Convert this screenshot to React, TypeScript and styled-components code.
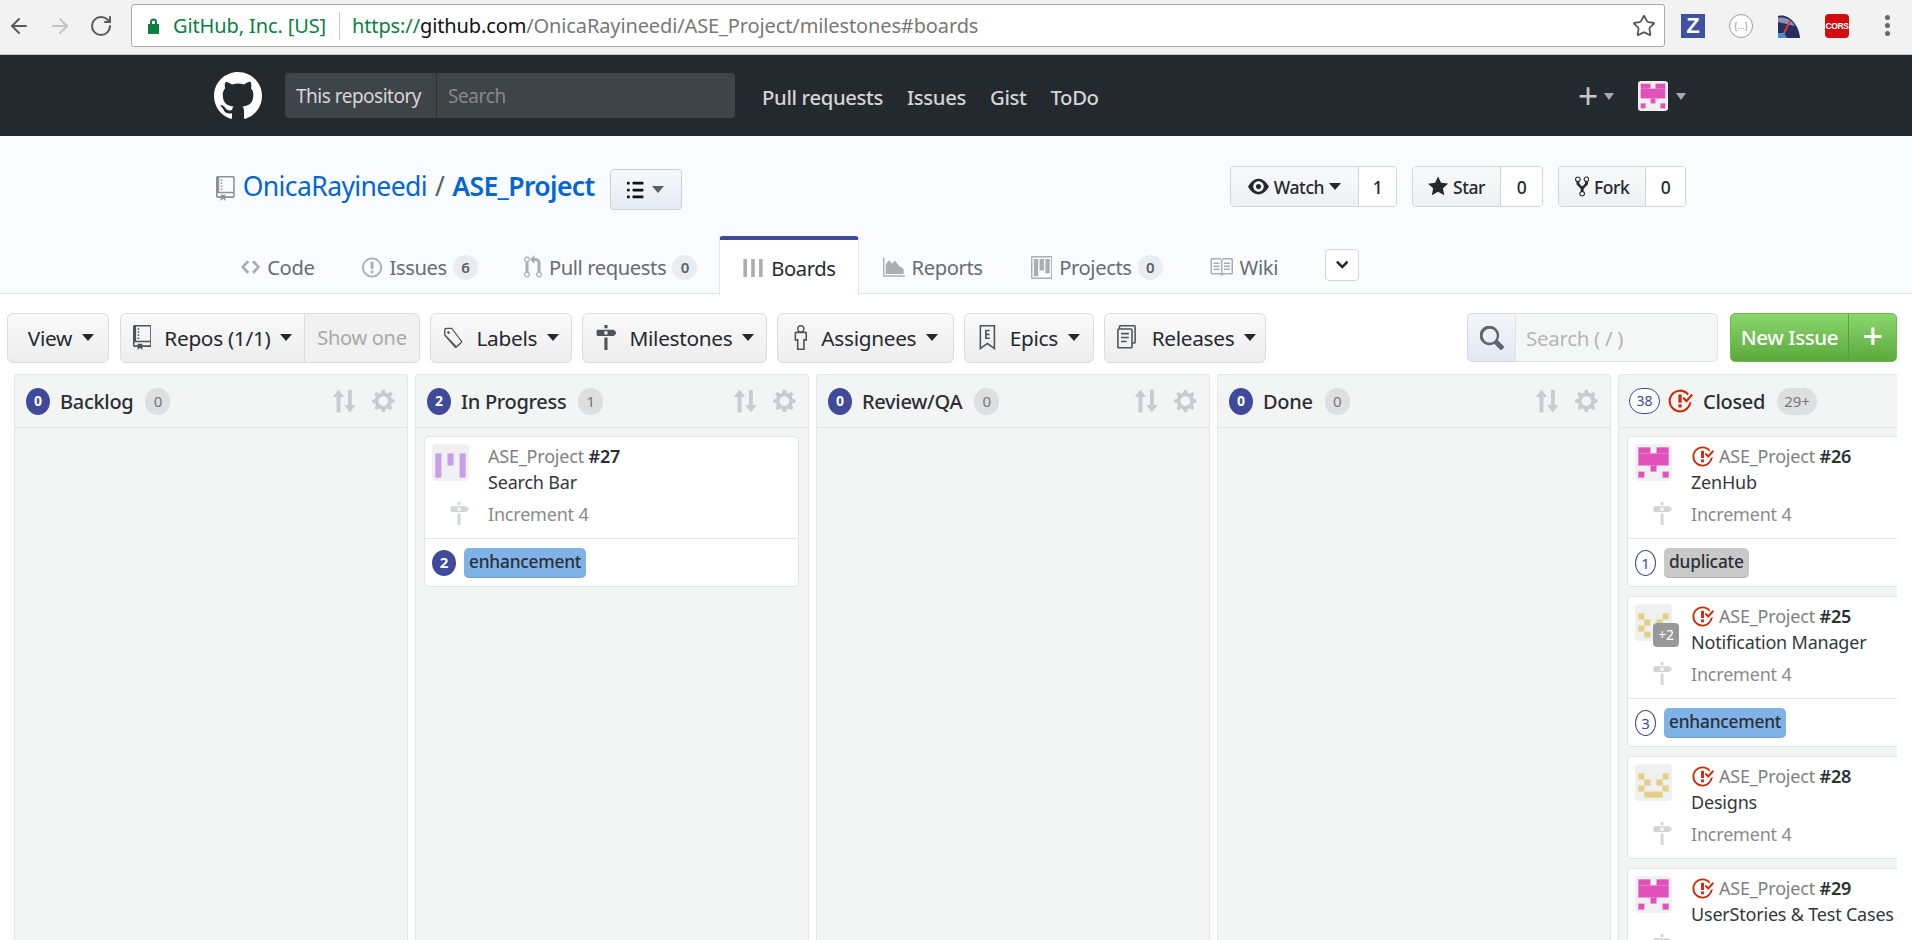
import React from 'react'
import styled, { createGlobalStyle } from 'styled-components'
import { ArrowLeft, ArrowRight, RotateCw, Star } from 'lucide-react'

const GlobalStyle = createGlobalStyle`
  html, body {
    margin: 0;
    height: 940px;
    overflow: hidden;
    background: #fff;
    font-family: "Noto Sans", "Open Sans", sans-serif;
    color: #24292e;
  }
  * { box-sizing: border-box; }
`

const paths = {
  mark: 'M8 0C3.58 0 0 3.58 0 8c0 3.54 2.29 6.53 5.47 7.59.4.07.55-.17.55-.38 0-.19-.01-.82-.01-1.49-2.01.37-2.53-.49-2.69-.94-.09-.23-.48-.94-.82-1.13-.28-.15-.68-.52-.01-.53.63-.01 1.08.58 1.23.82.72 1.21 1.87.87 2.33.66.07-.52.28-.87.51-1.07-1.78-.2-3.64-.89-3.64-3.95 0-.87.31-1.59.82-2.15-.08-.2-.36-1.02.08-2.12 0 0 .67-.21 2.2.82.64-.18 1.32-.27 2-.27.68 0 1.36.09 2 .27 1.53-1.04 2.2-.82 2.2-.82.44 1.1.16 1.92.08 2.12.51.56.82 1.27.82 2.15 0 3.07-1.87 3.75-3.65 3.95.29.25.54.73.54 1.48 0 1.07-.01 1.93-.01 2.2 0 .21.15.46.55.38A8.013 8.013 0 0016 8c0-4.42-3.58-8-8-8z',
  milestone: 'M8 2H6V0h2v2zm4 5H2c-.55 0-1-.45-1-1V4c0-.55.45-1 1-1h10l2 2-2 2zM8 4H6v2h2V4zM6 16h2V8H6v8z',
  repo: 'M4 9H3V8h1v1zm0-3H3v1h1V6zm0-2H3v1h1V4zm0-2H3v1h1V2zm8-1v12c0 .55-.45 1-1 1H6v2l-1.5-1.5L3 16v-2H1c-.55 0-1-.45-1-1V1c0-.55.45-1 1-1h10c.55 0 1 .45 1 1zm-1 10H1v2h2v-1h3v1h5v-2zm0-10H2v9h9V1z',
  code: 'M9.5 3L8 4.5 11.5 8 8 11.5 9.5 13 14 8 9.5 3zm-5 0L0 8l4.5 5L6 11.5 2.5 8 6 4.5 4.5 3z',
  issue: 'M7 2.3c3.14 0 5.7 2.56 5.7 5.7s-2.56 5.7-5.7 5.7A5.71 5.71 0 0 1 1.3 8c0-3.14 2.56-5.7 5.7-5.7zM7 1C3.14 1 0 4.14 0 8s3.14 7 7 7 7-3.14 7-7-3.14-7-7-7zm1 3H6v5h2V4zm0 6H6v2h2v-2z',
  pull: 'M11 11.28V5c-.03-.78-.34-1.47-.94-2.06C9.46 2.35 8.78 2.03 8 2H7V0L4 3l3 3V4h1c.27.02.48.11.69.31.21.2.3.42.31.69v6.28A1.993 1.993 0 0 0 10 15a1.993 1.993 0 0 0 1-3.72zm-1 2.92c-.66 0-1.2-.55-1.2-1.2 0-.65.55-1.2 1.2-1.2.65 0 1.2.55 1.2 1.2 0 .65-.55 1.2-1.2 1.2zM4 3c0-1.11-.89-2-2-2a1.993 1.993 0 0 0-1 3.72v6.56A1.993 1.993 0 0 0 2 15a1.993 1.993 0 0 0 1-3.72V4.72c.59-.34 1-.98 1-1.72zm-.8 10c0 .66-.55 1.2-1.2 1.2-.65 0-1.2-.55-1.2-1.2 0-.65.55-1.2 1.2-1.2.65 0 1.2.55 1.2 1.2zM2 4.2C1.34 4.2.8 3.65.8 3c0-.65.55-1.2 1.2-1.2.65 0 1.2.55 1.2 1.2 0 .65-.55 1.2-1.2 1.2z',
  eye: 'M8.06 2C3 2 0 8 0 8s3 6 8.06 6C13 14 16 8 16 8s-3-6-7.94-6zM8 12c-2.2 0-4-1.78-4-4 0-2.2 1.8-4 4-4 2.22 0 4 1.8 4 4 0 2.22-1.78 4-4 4zm2-4c0 1.11-.89 2-2 2-1.11 0-2-.89-2-2 0-1.11.89-2 2-2 1.11 0 2 .89 2 2z',
  star: 'M14 6l-4.9-.64L7 1 4.9 5.36 0 6l3.6 3.26L2.67 14 7 11.67 11.33 14l-.93-4.74L14 6z',
  fork: 'M8 1a1.993 1.993 0 0 0-1 3.72V6L5 8 3 6V4.72A1.993 1.993 0 0 0 2 1a1.993 1.993 0 0 0-1 3.72V6.5l3 3v1.78A1.993 1.993 0 0 0 5 15a1.993 1.993 0 0 0 1-3.72V9.5l3-3V4.72A1.993 1.993 0 0 0 8 1zM2 4.2C1.34 4.2.8 3.65.8 3c0-.65.55-1.2 1.2-1.2.65 0 1.2.55 1.2 1.2 0 .65-.55 1.2-1.2 1.2zm3 10c-.66 0-1.2-.55-1.2-1.2 0-.65.55-1.2 1.2-1.2.65 0 1.2.55 1.2 1.2 0 .65-.55 1.2-1.2 1.2zm3-10c-.66 0-1.2-.55-1.2-1.2 0-.65.55-1.2 1.2-1.2.65 0 1.2.55 1.2 1.2 0 .65-.55 1.2-1.2 1.2z',
  boards: 'M1 1.5h2.6v13H1zM6.7 1.5h2.6v13H6.700zM12.400 1.5H15v13h-2.600z',
  reports: 'M0 1h1v13h15v1H0zM2 13V6l2.500-3 2 2.500L9 3.500l2.500 3.500 3.500 2.500V13z',
  project: 'M10 12h3V2h-3v10zm-4-2h3V2H6v8zm-4 4h3V2H2v12zm-1 1h13V1H1v14zM14 0H1a1 1 0 0 0-1 1v14a1 1 0 0 0 1 1h13a1 1 0 0 0 1-1V1a1 1 0 0 0-1-1z',
  book: 'M3 5h4v1H3V5zm0 3h4V7H3v1zm0 2h4V9H3v1zm11-5h-4v1h4V5zm0 2h-4v1h4V7zm0 2h-4v1h4V9zm2-6v9c0 .55-.45 1-1 1H9.5l-1 1-1-1H2c-.55 0-1-.45-1-1V3c0-.55.45-1 1-1h5.5l1 1 1-1H15c.55 0 1 .45 1 1zm-8 .5L7.5 3H2v9h6V3.5zm7-.5H9.500l-.5.5V12h6V3z',
  list: 'M2 13c0 .59 0 1-.59 1H.59C0 14 0 13.59 0 13c0-.59 0-1 .59-1h.81c.59 0 .59.41.59 1H2zm2.59-9h6.81c.59 0 .59-.41.59-1 0-.59 0-1-.59-1H4.59C4 2 4 2.41 4 3c0 .59 0 1 .59 1zM1.41 7H.59C0 7 0 7.41 0 8c0 .59 0 1 .59 1h.81c.59 0 .59-.41.59-1 0-.59 0-1-.59-1h.01zm0-5H.59C0 2 0 2.41 0 3c0 .59 0 1 .59 1h.81c.59 0 .59-.41.59-1 0-.59 0-1-.59-1h.01zm10 5H4.59C4 7 4 7.41 4 8c0 .59 0 1 .59 1h6.81c.59 0 .59-.41.59-1 0-.59 0-1-.59-1h.01zm0 5H4.59C4 12 4 12.41 4 13c0 .59 0 1 .59 1h6.81c.59 0 .59-.41.59-1 0-.59 0-1-.59-1h.01z',
  tag: 'M2.500.5H6a1 1 0 0 1 .8.4l7 9.300a1 1 0 0 1-.2 1.400l-3.700 3.400a1 1 0 0 1-1.400-.1L1 6.300a1 1 0 0 1-.2-.6V2.200A1.700 1.700 0 0 1 2.500.5zm0 1a.7.7 0 0 0-.7.7v3.400l7.900 8.300 3.500-3.200-7-9.200zM4 3a1 1 0 1 1 0 2 1 1 0 0 1 0-2z',
  person: 'M5 0a2.500 2.500 0 0 1 1.800 4.200H8a1 1 0 0 1 1 1V10H7.500v6h-5v-6H1V5.200a1 1 0 0 1 1-1h1.200A2.500 2.500 0 0 1 5 0zm0 1a1.500 1.500 0 1 0 0 3 1.500 1.500 0 0 0 0-3zM2 5.200V9h1.500v6h3V9H8V5.200z',
  epic: 'M1 0h10v16l-5-3.500L1 16zm1 1v13l4-2.800 4 2.800V1zm2.500 2h3v1h-2v1.500h1.800v1H5.500V8h2v1h-3z',
  release: 'M4 0h9a1 1 0 0 1 1 1v10a1 1 0 0 1-1 1h-1v2a1 1 0 0 1-1 1H3a1 1 0 0 1-1-1V3a1 1 0 0 1 1-1V1a1 1 0 0 1 1-1zm0 2h7a1 1 0 0 1 1 1v8h1V1H4zM3 3v11h8V3zm1.500 2h5v1h-5zm0 2.500h5v1h-5zm0 2.500h3.500v1H4.500z',
  search: 'M15.700 13.300l-3.800-3.800A6.500 6.500 0 1 0 9.500 11.900l3.800 3.800a.9.9 0 0 0 1.300 0l1.100-1.100a.9.9 0 0 0 0-1.300zM6.500 11.200a4.700 4.700 0 1 1 0-9.400 4.700 4.700 0 0 1 0 9.400z',
  closed: 'M7 10h2v2H7v-2zm2-6H7v5h2V4zm1.500 1.500l-1 1L12 9l4-4.500-1-1L12 7l-1.500-1.500zM8 13.700A5.710 5.710 0 0 1 2.300 8c0-3.140 2.560-5.700 5.700-5.700 1.830 0 3.450.88 4.500 2.200l.92-.92A6.947 6.947 0 0 0 8 1C4.140 1 1 4.140 1 8s3.140 7 7 7 7-3.140 7-7l-1.520 1.520c-.66 2.410-2.860 4.190-5.480 4.190v-.01z',
  sort: 'M4 1l3.500 4.500H5.200V15H2.800V5.500H.5zM11 15l-3.500-4.500h2.300V1h2.400v9.500h2.300z',
  gear: 'M14 8.770v-1.600l-1.940-.64-.45-1.090.88-1.840-1.130-1.130-1.810.91-1.090-.45-.69-1.920h-1.600l-.63 1.940-1.110.45-1.840-.88-1.130 1.130.91 1.810-.45 1.090L0 7.230v1.590l1.940.64.45 1.090-.88 1.840 1.130 1.130 1.810-.91 1.090.45.69 1.920h1.590l.63-1.940 1.110-.45 1.840.88 1.130-1.130-.92-1.810.47-1.090L14 8.750v.02zM7 11c-1.660 0-3-1.340-3-3s1.340-3 3-3 3 1.340 3 3-1.340 3-3 3z',
  chevron: 'M5 11L0 6l1.500-1.500L5 8.250 8.500 4.500 10 6l-5 5z',
}

const Glyph = styled.svg<{ $color?: string }>`
  display: block;
  flex: none;
  fill: ${p => p.$color || 'currentColor'};
`

function Octicon({ d, vw = 16, h = 20, color }: { d: string; vw?: number; h?: number; color?: string }) {
  return (
    <Glyph $color={color} viewBox={`0 0 ${vw} 16`} width={(h * vw) / 16} height={h}>
      <path d={d} fillRule="evenodd" />
    </Glyph>
  )
}

// identicons, cells on a 5x5 grid
function Identicon({ cells, color, size = 37 }: { cells: number[][]; color: string; size?: number }) {
  return (
    <Glyph viewBox="-0.55 -0.55 6.1 6.1" width={size} height={size}>
      {cells.map(([x, y, w = 1, h = 1]) => (
        <rect key={`${x}-${y}`} x={x} y={y} width={w} height={h} fill={color} />
      ))}
    </Glyph>
  )
}

const pinkCells = [[0, 0, 2, 1], [3, 0, 2, 1], [0, 1, 5, 2], [2, 3, 1, 1], [0, 4, 1, 1], [4, 4, 1, 1]]
const purpleCells = [[0, 1, 1, 4], [4, 1, 1, 4], [2, 1, 1, 2]]
const smileCells = [[0, 1], [4, 1], [1, 2], [3, 2], [0, 3], [4, 3], [1, 4, 3, 1]]
const checkCells = [[0, 1], [4, 1], [1, 2], [3, 2], [0, 3], [1, 4]]

const ChromeBar = styled.div`
  height: 55px;
  background: #f2f2f2;
  border-bottom: 1px solid #c8c8c8;
  display: flex;
  align-items: center;
  padding: 0 0 3px 7px;
`
const BrowserNav = styled.div<{ $off?: boolean }>`
  width: 41px;
  color: ${p => (p.$off ? '#c4c4c4' : '#5a5a5a')};
  display: flex;
  align-items: center;
`
const UrlBox = styled.div`
  width: 1534px;
  height: 43px;
  margin-left: 1px;
  background: #fff;
  border: 1px solid #a9a9a9;
  border-radius: 3px;
  display: flex;
  align-items: center;
  padding: 0 8px 0 15px;
  font-size: 20px;
  letter-spacing: -0.12px;
  white-space: nowrap;
`
const SiteName = styled.span`
  color: #0b8043;
  margin-left: 13px;
  padding-right: 13px;
  margin-right: 12px;
  border-right: 1px solid #c9c9c9;
  line-height: 28px;
`
const UrlText = styled.span`
  color: #787878;
  flex: 1;
`
const UrlScheme = styled.span`color: #0b8043;`
const UrlHost = styled.span`color: #111;`
const ExtIcons = styled.div`
  display: flex;
  align-items: center;
  margin-left: 16px;
  gap: 24px;
`
const ExtZ = styled.div`
  width: 24px;
  height: 24px;
  background: #3f51a3;
  color: #fff;
  font: bold 22px/24px "Liberation Sans", sans-serif;
  text-align: center;
`
const ExtJson = styled.div`
  width: 24px;
  height: 24px;
  border-radius: 50%;
  border: 1px solid #9a9a9a;
  background: #fff;
  color: #888;
  font: 9px/22px "Liberation Sans", sans-serif;
  text-align: center;
`
const ExtCors = styled.div`
  width: 24px;
  height: 24px;
  border-radius: 4px;
  background: #d00c0c;
  color: #fff;
  font: bold 8.5px/24px "Liberation Sans", sans-serif;
  letter-spacing: -0.4px;
  text-align: center;
`
const KebabDots = styled.div`
  width: 5px;
  height: 21px;
  margin-left: 12px;
  display: flex;
  flex-direction: column;
  justify-content: space-between;
  > i {
    display: block;
    width: 5px;
    height: 5px;
    border-radius: 50%;
    background: #666;
  }
`

const TopNav = styled.div`
  height: 81px;
  background: #24292e;
  display: flex;
  align-items: center;
  padding-left: 214px;
`
const SearchScope = styled.div`
  width: 450px;
  height: 45px;
  margin-left: 23px;
  background: #3f4448;
  border-radius: 4px;
  display: flex;
  align-items: center;
  font-size: 19px;
`
const ScopeLabel = styled.span`
  color: #d5d6d7;
  width: 152px;
  height: 45px;
  line-height: 46px;
  padding-left: 11px;
  border-right: 1px solid #2d3236;
  letter-spacing: -0.5px;
`
const ScopeInput = styled.span`
  color: #85898c;
  padding: 1px 0 0 11px;
  letter-spacing: -0.4px;
`
const NavLinks = styled.div`
  display: flex;
  gap: 24px;
  margin-left: 27px;
  padding-top: 3px;
  font-size: 20.3px;
  font-weight: 500;
  color: #d3d4d5;
  letter-spacing: -0.35px;
`
const NavRight = styled.div`
  margin-left: auto;
  padding-right: 226px;
  display: flex;
  align-items: center;
  color: #c4c6c7;
`
const PlusMark = styled.span`
  font-size: 36px;
  line-height: 36px;
  font-weight: 400;
  width: 24px;
  text-align: center;
`
const NavCaret = styled.i`
  display: block;
  width: 0;
  height: 0;
  margin: 2px 0 0 4px;
  border: 5.5px solid transparent;
  border-top: 7px solid #a9abad;
  border-bottom: 0;
`
const NavAvatar = styled.div`
  width: 30px;
  height: 30px;
  margin-left: 24px;
  margin-right: 4px;
  background: #f0f0f0;
  border-radius: 3px;
  overflow: hidden;
`

const RepoHead = styled.div`
  height: 158px;
  background: #fafbfc;
  border-bottom: 1px solid #e1e4e8;
  padding-top: 30px;
`
const TitleRow = styled.div`
  height: 44px;
  display: flex;
  align-items: center;
  padding: 0 226px 0 216px;
`
const RepoTitle = styled.h1`
  margin: -4px 0 0 8px;
  font-size: 26.5px;
  font-weight: 400;
  color: #586069;
  letter-spacing: -0.6px;
  display: flex;
  gap: 8px;
  > a { color: #0366d6; }
  > strong { color: #0366d6; font-weight: 600; }
`
const ListButton = styled.button`
  align-self: flex-end;
  width: 72px;
  height: 41px;
  margin-left: 15px;
  border: 1px solid #c9d0da;
  border-radius: 4px;
  background: linear-gradient(#f7f9fc, #e5eaf4);
  display: flex;
  align-items: center;
  justify-content: center;
  gap: 8px;
  color: #111;
`
const SmallCaret = styled.i<{ $color?: string }>`
  display: block;
  width: 0;
  height: 0;
  border: 6px solid transparent;
  border-top: 7px solid ${p => p.$color || '#24292e'};
  border-bottom: 0;
`
const RepoActions = styled.div`
  align-self: flex-start;
  margin-left: auto;
  display: flex;
  gap: 15px;
`
const ActionGroup = styled.div`
  height: 41px;
  display: flex;
  border: 1px solid #d1d5da;
  border-radius: 4px;
  font-size: 17.5px;
  font-weight: 500;
  overflow: hidden;
  letter-spacing: -0.4px;
`
const ActionMain = styled.div<{ $w: number }>`
  width: ${p => p.$w}px;
  background: linear-gradient(#f9fafb, #eef0f2);
  display: flex;
  align-items: center;
  justify-content: center;
  gap: 5px;
  border-right: 1px solid #d1d5da;
`
const ActionCount = styled.div<{ $w: number }>`
  width: ${p => p.$w}px;
  background: #fff;
  display: flex;
  align-items: center;
  justify-content: center;
`
const TabRow = styled.div`
  height: 58px;
  margin-top: 26px;
  display: flex;
  align-items: stretch;
  padding-left: 217px;
`
const Tab = styled.div<{ $active?: boolean }>`
  display: flex;
  align-items: center;
  gap: 7px;
  padding: ${p => (p.$active ? '0 22px' : '4px 24px 0')};
  font-size: 20.2px;
  letter-spacing: -0.4px;
  color: ${p => (p.$active ? '#24292e' : '#666d74')};
  ${p =>
    p.$active &&
    `
    background: #fff;
    border: 1px solid #e1e4e8;
    border-bottom: 0;
    border-top: 4px solid #3f4a99;
    border-radius: 4px 4px 0 0;
    height: 59px;
  `}
`
const TabBadge = styled.span`
  min-width: 25px;
  height: 25px;
  margin-left: -1px;
  margin-right: -2px;
  line-height: 24px;
  border-radius: 50%;
  background: #eaecef;
  color: #586069;
  font-size: 15px;
  font-weight: 600;
  text-align: center;
`
const MoreButton = styled.button`
  align-self: center;
  width: 34px;
  height: 32px;
  margin: 0 0 1px 23px;
  background: #fff;
  border: 1px solid #d1d5da;
  border-radius: 4px;
  display: flex;
  align-items: center;
  justify-content: center;
  padding: 0;
  color: #24292e;
`

const Toolbar = styled.div`
  height: 80px;
  display: flex;
  align-items: center;
  gap: 10px;
  padding: 7px 15px 0 7px;
`
const FilterButton = styled.div<{ $w: number; $grouped?: boolean }>`
  width: ${p => p.$w}px;
  height: 50px;
  display: flex;
  align-items: center;
  justify-content: center;
  gap: 10px;
  font-size: 20.8px;
  letter-spacing: -0.3px;
  color: #24292e;
  background: linear-gradient(#fafafa, #ededed);
  border: 1px solid #dcdcdc;
  border-radius: ${p => (p.$grouped ? '6px 0 0 6px' : '6px')};
  > svg { margin-right: 3px; }
`
const ViewButton = styled(FilterButton)`
  padding-left: 6px;
`
const FilterGroup = styled.div`
  display: flex;
  margin-left: 1px;
`
const ShowOne = styled.div`
  width: 116px;
  height: 50px;
  margin-left: -1px;
  line-height: 48px;
  text-align: center;
  font-size: 20px;
  letter-spacing: -0.3px;
  color: #a9a9a9;
  background: #f1f1f1;
  border: 1px solid #dcdcdc;
  border-radius: 0 6px 6px 0;
`
const BoardSearch = styled.div`
  margin-left: auto;
  display: flex;
  height: 49px;
`
const SearchAddon = styled.div`
  width: 49px;
  background: linear-gradient(#f3f5fa, #e2e8f3);
  border: 1px solid #d3d9e4;
  border-radius: 5px 0 0 5px;
  display: flex;
  align-items: center;
  justify-content: center;
  color: #5c6670;
`
const SearchField = styled.div`
  width: 203px;
  margin-left: -1px;
  line-height: 48px;
  padding-left: 10px;
  font-size: 20.5px;
  letter-spacing: -0.3px;
  color: #b5b5b5;
  background: #f5f6f6;
  border: 1px solid #dfe1e4;
  border-radius: 0 5px 5px 0;
`
const NewIssue = styled.div`
  display: flex;
  width: 167px;
  height: 49px;
  margin-left: 2px;
  color: #fff;
  font-size: 20.5px;
  font-weight: 500;
  letter-spacing: -0.4px;
  background: linear-gradient(#8bd76d, #5ba83d);
  border-radius: 5px;
  border: 1px solid #6cb84d;
`
const NewIssueText = styled.span`
  width: 118px;
  text-align: center;
  line-height: 46px;
  border-right: 1px solid #5a9e3e;
`
const NewIssuePlus = styled.span`
  flex: 1;
  text-align: center;
  font-size: 36px;
  font-weight: 500;
  line-height: 44px;
`

const Board = styled.div`
  display: flex;
  gap: 7px;
  width: 1883px;
  margin-left: 14px;
  overflow: hidden;
  height: 566px;
`
const Column = styled.section`
  flex: none;
  width: 394px;
  height: 600px;
  background: #f3f5f5;
  border: 1px solid #e4e7e8;
  border-radius: 3px 3px 0 0;
`
const ColumnHead = styled.header`
  height: 53px;
  border-bottom: 1px solid #e4e7e8;
  display: flex;
  align-items: center;
  padding: 0 12px 0 11px;
`
const CountDot = styled.span`
  width: 24px;
  height: 27px;
  border-radius: 50%;
  background: #3f4a9b;
  color: #fff;
  font-size: 14px;
  font-weight: 700;
  text-align: center;
  line-height: 26px;
`
const CountRing = styled.span`
  width: 31px;
  height: 26px;
  margin-left: -1px;
  margin-right: 7px;
  border-radius: 13px;
  background: #fff;
  border: 1px solid #3f4a9b;
  color: #3f4a9b;
  font-size: 14px;
  text-align: center;
  line-height: 24px;
`
const ColumnName = styled.span`
  font-size: 20px;
  font-weight: 500;
  letter-spacing: -0.3px;
  margin-left: 10px;
  color: #2b2f33;
`
const ColumnCount = styled.span`
  min-width: 25px;
  height: 27px;
  padding: 0 7px;
  margin-left: 12px;
  border-radius: 14px;
  background: #dedfe0;
  color: #777;
  font-size: 15px;
  text-align: center;
  line-height: 26px;
`
const ColumnTools = styled.div`
  margin-left: auto;
  display: flex;
  align-items: center;
  gap: 14px;
`
const CardList = styled.div`
  padding: 8px 0 0 8px;
  display: flex;
  flex-direction: column;
  gap: 9px;
`
const Card = styled.article`
  width: 375px;
  background: #fff;
  border: 1px solid #e3e5e7;
  border-radius: 5px;
  font-size: 18px;
  letter-spacing: -0.2px;
`
const CardBody = styled.div`
  display: grid;
  grid-template-columns: 56px 1fr;
  grid-template-rows: 26px 26px 34px;
  padding: 6px 7px 8px;
  height: 101px;
`
const AvatarBox = styled.div`
  position: relative;
  grid-row: 1 / 3;
  width: 37px;
  height: 37px;
  margin-top: 1px;
  background: #f0f0f0;
  border-radius: 4px;
`
const ExtraBadge = styled.span`
  position: absolute;
  right: -7px;
  bottom: -6px;
  width: 26px;
  height: 24px;
  border-radius: 4px;
  background: #999;
  color: #fff;
  font-size: 14px;
  line-height: 23px;
  text-align: center;
`
const IssueLine = styled.div`
  display: flex;
  align-items: center;
  gap: 5px;
  color: #808080;
  white-space: nowrap;
  b { color: #2b2f33; font-weight: 600; }
`
const IssueTitle = styled.div`
  color: #33383c;
  white-space: nowrap;
  line-height: 26px;
`
const MilestoneIcon = styled.div`
  margin: 7px 0 0 17px;
`
const MilestoneName = styled.div`
  color: #8a8a8a;
  line-height: 32px;
  margin-top: 3px;
`
const CardFoot = styled.div`
  height: 48px;
  border-top: 1px solid #e3e5e7;
  display: flex;
  align-items: center;
  gap: 8px;
  padding: 0 7px;
  font-size: 17.3px;
`
const PointDot = styled.span`
  width: 24px;
  height: 26px;
  border-radius: 50%;
  background: #3f4a9b;
  color: #fff;
  font-weight: 700;
  font-size: 15px;
  line-height: 25px;
  text-align: center;
`
const PointRing = styled.span`
  min-width: 21px;
  padding: 0 5px;
  height: 26px;
  border-radius: 50%;
  border: 1px solid #3f4a9b;
  color: #3f4a9b;
  font-size: 15px;
  line-height: 24px;
  text-align: center;
`
const Label = styled.span<{ $bg: string }>`
  height: 30px;
  line-height: 28px;
  padding: 0 5px;
  border-radius: 5px;
  background: ${p => p.$bg};
  box-shadow: inset 0 -1px 0 rgba(0, 0, 0, 0.12);
  color: #2b2f33;
  font-weight: 500;
`

type CardData = {
  num: number
  title: string
  cells: number[][]
  color: string
  closed?: boolean
  extra?: string
  points?: number
  solid?: boolean
  label?: string
  labelBg?: string
}

const blue = '#7fb3e8'
const pink = '#e052b9'
const yellow = '#e3cf85'

const columns: { name: string; count: number; total: string; cards: CardData[] }[] = [
  { name: 'Backlog', count: 0, total: '0', cards: [] },
  {
    name: 'In Progress',
    count: 2,
    total: '1',
    cards: [
      { num: 27, title: 'Search Bar', cells: purpleCells, color: '#c79fe8', points: 2, solid: true, label: 'enhancement', labelBg: blue },
    ],
  },
  { name: 'Review/QA', count: 0, total: '0', cards: [] },
  { name: 'Done', count: 0, total: '0', cards: [] },
]

const closedCards: CardData[] = [
  { num: 26, title: 'ZenHub', cells: pinkCells, color: pink, closed: true, points: 1, label: 'duplicate', labelBg: '#c9c9c9' },
  { num: 25, title: 'Notification Manager', cells: checkCells, color: yellow, closed: true, extra: '+2', points: 3, label: 'enhancement', labelBg: blue },
  { num: 28, title: 'Designs', cells: smileCells, color: yellow, closed: true },
  { num: 29, title: 'UserStories & Test Cases', cells: pinkCells, color: pink, closed: true },
]

function IssueCard({ card }: { card: CardData }) {
  return (
    <Card>
      <CardBody>
        <AvatarBox>
          <Identicon cells={card.cells} color={card.color} />
          {card.extra && <ExtraBadge>{card.extra}</ExtraBadge>}
        </AvatarBox>
        <IssueLine>
          {card.closed && <Octicon d={paths.closed} h={23} color="#cb2a07" />}
          <span>ASE_Project <b>#{card.num}</b></span>
        </IssueLine>
        <IssueTitle>{card.title}</IssueTitle>
        <MilestoneIcon>
          <Octicon d={paths.milestone} vw={14} h={23} color="#d1d5da" />
        </MilestoneIcon>
        <MilestoneName>Increment 4</MilestoneName>
      </CardBody>
      {card.label && (
        <CardFoot>
          {card.solid ? <PointDot>{card.points}</PointDot> : <PointRing>{card.points}</PointRing>}
          <Label $bg={card.labelBg || blue}>{card.label}</Label>
        </CardFoot>
      )}
    </Card>
  )
}

function Tools() {
  return (
    <ColumnTools>
      <Octicon d={paths.sort} h={26} color="#c8ccd0" />
      <Octicon d={paths.gear} vw={14} h={26} color="#c8ccd0" />
    </ColumnTools>
  )
}

const filters = [
  { text: 'Labels', w: 142, icon: paths.tag, vw: 15, h: 22 },
  { text: 'Milestones', w: 185, icon: paths.milestone, vw: 14, h: 25 },
  { text: 'Assignees', w: 177, icon: paths.person, vw: 10, h: 25 },
  { text: 'Epics', w: 130, icon: paths.epic, vw: 12, h: 25 },
  { text: 'Releases', w: 162, icon: paths.release, vw: 16, h: 25 },
]

export default function App() {
  return (
    <>
      <GlobalStyle />
      <ChromeBar>
        <BrowserNav><ArrowLeft size={24} strokeWidth={2} /></BrowserNav>
        <BrowserNav $off><ArrowRight size={24} strokeWidth={2} /></BrowserNav>
        <BrowserNav><RotateCw size={24} strokeWidth={2} /></BrowserNav>
        <UrlBox>
          <svg width="13" height="17" viewBox="0 0 13 17">
            <path d="M3 7V5a3.500 3.500 0 0 1 7 0v2h2v10H1V7zm2 0h3V5a1.500 1.500 0 0 0-3 0z" fill="#0b8043" />
          </svg>
          <SiteName>GitHub, Inc. [US]</SiteName>
          <UrlText>
            <UrlScheme>https://</UrlScheme>
            <UrlHost>github.com</UrlHost>/OnicaRayineedi/ASE_Project/milestones#boards
          </UrlText>
          <Star size={24} color="#555" strokeWidth={1.8} />
        </UrlBox>
        <ExtIcons>
          <ExtZ>Z</ExtZ>
          <ExtJson>{'{...}'}</ExtJson>
          <svg width="24" height="24" viewBox="0 0 24 24">
            <path d="M1 24V2c10-3 21 8 22 22z" fill="#27305c" />
            <path d="M1 4c8-2 14 3 17 8L1 8z" fill="#8a93b5" />
            <path d="M5 23L13 7" stroke="#e03a3a" strokeWidth="2" />
            <path d="M1 19h6l3 5H1z" fill="#3f8fd8" />
          </svg>
          <ExtCors>CORS</ExtCors>
          <KebabDots><i /><i /><i /></KebabDots>
        </ExtIcons>
      </ChromeBar>

      <TopNav>
        <Octicon d={paths.mark} h={48} color="#fff" />
        <SearchScope>
          <ScopeLabel>This repository</ScopeLabel>
          <ScopeInput>Search</ScopeInput>
        </SearchScope>
        <NavLinks>
          <span>Pull requests</span>
          <span>Issues</span>
          <span>Gist</span>
          <span>ToDo</span>
        </NavLinks>
        <NavRight>
          <PlusMark>+</PlusMark>
          <NavCaret />
          <NavAvatar><Identicon cells={pinkCells} color={pink} size={30} /></NavAvatar>
          <NavCaret />
        </NavRight>
      </TopNav>

      <RepoHead>
        <TitleRow>
          <Octicon d={paths.repo} vw={12} h={25} color="#8b9299" />
          <RepoTitle>
            <a>OnicaRayineedi</a>
            <span>/</span>
            <strong>ASE_Project</strong>
          </RepoTitle>
          <ListButton>
            <Octicon d={paths.list} vw={12} h={22} color="#111" />
            <SmallCaret $color="#586069" />
          </ListButton>
          <RepoActions>
            <ActionGroup>
              <ActionMain $w={128}>
                <Octicon d={paths.eye} h={21} />
                Watch
                <SmallCaret />
              </ActionMain>
              <ActionCount $w={37}>1</ActionCount>
            </ActionGroup>
            <ActionGroup>
              <ActionMain $w={88}>
                <Octicon d={paths.star} vw={14} h={23} />
                Star
              </ActionMain>
              <ActionCount $w={41}>0</ActionCount>
            </ActionGroup>
            <ActionGroup>
              <ActionMain $w={87}>
                <Octicon d={paths.fork} vw={10} h={23} />
                Fork
              </ActionMain>
              <ActionCount $w={39}>0</ActionCount>
            </ActionGroup>
          </RepoActions>
        </TitleRow>
        <TabRow>
          <Tab><Octicon d={paths.code} vw={14} h={22} color="#a9aeb3" />Code</Tab>
          <Tab><Octicon d={paths.issue} vw={14} h={23} color="#a9aeb3" />Issues<TabBadge>6</TabBadge></Tab>
          <Tab><Octicon d={paths.pull} vw={12} h={24} color="#a9aeb3" />Pull requests<TabBadge>0</TabBadge></Tab>
          <Tab $active><Octicon d={paths.boards} h={22} color="#a9aeb3" />Boards</Tab>
          <Tab><Octicon d={paths.reports} h={22} color="#a9aeb3" />Reports</Tab>
          <Tab><Octicon d={paths.project} vw={15} h={23} color="#a9aeb3" />Projects<TabBadge>0</TabBadge></Tab>
          <Tab><Octicon d={paths.book} h={24} color="#a9aeb3" />Wiki</Tab>
          <MoreButton><Octicon d={paths.chevron} vw={10} h={20} /></MoreButton>
        </TabRow>
      </RepoHead>

      <Toolbar>
        <ViewButton $w={102}>View<SmallCaret /></ViewButton>
        <FilterGroup>
          <FilterButton $w={185} $grouped>
            <Octicon d={paths.repo} vw={12} h={25} color="#4b535b" />
            Repos (1/1)
            <SmallCaret />
          </FilterButton>
          <ShowOne>Show one</ShowOne>
        </FilterGroup>
        {filters.map(f => (
          <FilterButton key={f.text} $w={f.w}>
            <Octicon d={f.icon} vw={f.vw} h={f.h} color="#4b535b" />
            {f.text}
            <SmallCaret />
          </FilterButton>
        ))}
        <BoardSearch>
          <SearchAddon><Octicon d={paths.search} h={24} /></SearchAddon>
          <SearchField>Search ( / )</SearchField>
        </BoardSearch>
        <NewIssue>
          <NewIssueText>New Issue</NewIssueText>
          <NewIssuePlus>+</NewIssuePlus>
        </NewIssue>
      </Toolbar>

      <Board>
        {columns.map(col => (
          <Column key={col.name}>
            <ColumnHead>
              <CountDot>{col.count}</CountDot>
              <ColumnName>{col.name}</ColumnName>
              <ColumnCount>{col.total}</ColumnCount>
              <Tools />
            </ColumnHead>
            <CardList>
              {col.cards.map(c => <IssueCard key={c.num} card={c} />)}
            </CardList>
          </Column>
        ))}
        <Column>
          <ColumnHead>
            <CountRing>38</CountRing>
            <Octicon d={paths.closed} h={26} color="#cb2a07" />
            <ColumnName>Closed</ColumnName>
            <ColumnCount>29+</ColumnCount>
          </ColumnHead>
          <CardList>
            {closedCards.map(c => <IssueCard key={c.num} card={c} />)}
          </CardList>
        </Column>
      </Board>
    </>
  )
}
